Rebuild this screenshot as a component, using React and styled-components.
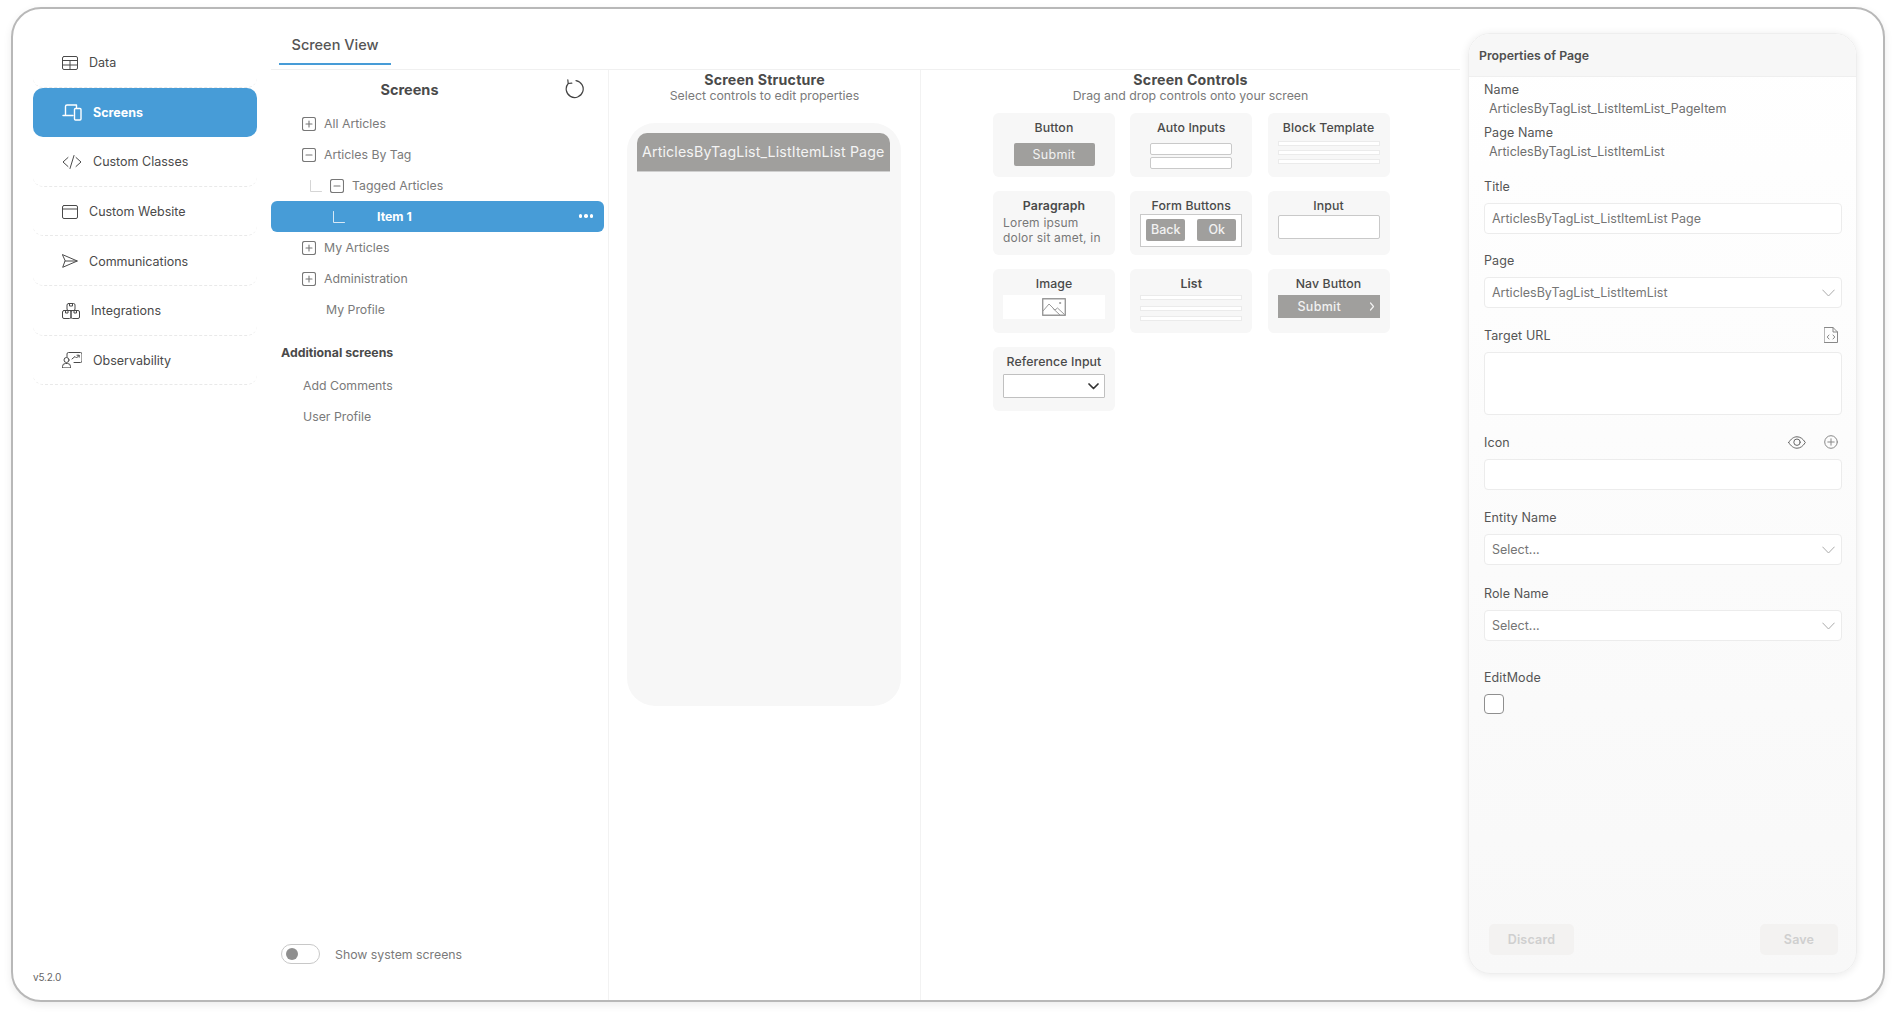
import React from 'react'
import styled, { createGlobalStyle } from 'styled-components'

const GlobalStyle = createGlobalStyle`
  html, body { margin: 0; padding: 0; background: #fff; }
  body { font-family: Inter, "Open Sans", "Liberation Sans", sans-serif; color: #555; }
  * { box-sizing: border-box; }
`

const Page = styled.div`
  width: 1896px;
  height: 1016px;
  padding: 7px 11px 14px 11px;
`

const Frame = styled.div`
  height: 100%;
  display: flex;
  border: 2px solid #b8b8b8;
  border-radius: 30px;
  box-shadow: 0 3px 8px rgba(0, 0, 0, 0.08);
  background: #fff;
  overflow: hidden;
`

/* sidebar */
const Sidebar = styled.nav`
  width: 258px;
  flex: none;
  padding: 29px 14px 16px 20px;
  display: flex;
  flex-direction: column;
`

const NavRow = styled.div`
  height: 49.6px;
  flex: none;
  display: flex;
  align-items: center;
  gap: 11px;
  padding: 1px 0 0 29px;
  border-radius: 10px;
  font-size: 12.5px;
  color: ${props => (props.$active ? '#fff' : '#4a4a4a')};
  font-weight: ${props => (props.$active ? 700 : 400)};
  background: ${props => (props.$active ? '#479cd7' : 'transparent')};
  border-bottom: 1px dashed ${props => (props.$active ? '#479cd7' : '#e9e9e9')};
`

const Version = styled.div`
  margin-top: auto;
  font-size: 10px;
  letter-spacing: -0.2px;
  color: #666;
  padding-bottom: 1px;
`

/* main area */
const Main = styled.main`
  flex: 1;
  min-width: 0;
  display: flex;
  flex-direction: column;
`

const TabBar = styled.div`
  height: 61px;
  flex: none;
  padding: 17px 0 0 8px;
  border-bottom: 1px solid #f0f0f0;
`

const Tab = styled.div`
  width: 112px;
  height: 39px;
  text-align: center;
  font-size: 14.5px;
  font-weight: 500;
  line-height: 38px;
  color: #555;
  border-bottom: 2px solid #479cd7;
`

const Panels = styled.div`
  flex: 1;
  min-height: 0;
  display: flex;
`

/* screens tree */
const ScreensPanel = styled.section`
  width: 338px;
  flex: none;
  display: flex;
  flex-direction: column;
  border-right: 1px solid #f2f2f2;
`

const ScreensHead = styled.div`
  height: 38px;
  padding-top: 1px;
  position: relative;
  display: flex;
  align-items: center;
  justify-content: center;
  font-size: 14.5px;
  font-weight: 700;
  color: #4a4a4a;
  padding-right: 60px;
`

const RefreshButton = styled.span`
  position: absolute;
  right: 23px;
  top: 9px;
  display: flex;
`

const Tree = styled.div`
  display: flex;
  flex-direction: column;
  width: 333px;
`

const TreeRow = styled.div`
  height: 31px;
  flex: none;
  display: flex;
  align-items: center;
  gap: 8px;
  padding-left: ${props => props.$indent}px;
  font-size: 12.3px;
  color: #7a7a7a;
`

const SelectedRow = styled(TreeRow)`
  position: relative;
  background: #479cd7;
  border-radius: 6px;
  color: #fff;
  font-weight: 700;
  gap: 32px;
`

const RowDots = styled.span`
  position: absolute;
  right: 11px;
  top: 13px;
  display: flex;
  gap: 2px;
`

const Dot = styled.i`
  width: 3.5px;
  height: 3.5px;
  border-radius: 50%;
  background: #fff;
`

const SectionTitle = styled.div`
  margin: 20px 0 0 10px;
  height: 16px;
  line-height: 16px;
  font-size: 12.3px;
  font-weight: 700;
  color: #4a4a4a;
`

const ExtraList = styled.div`
  margin-top: 9px;
  display: flex;
  flex-direction: column;
`

const ToggleRow = styled.label`
  margin-top: auto;
  margin-bottom: 36px;
  margin-left: 10px;
  display: flex;
  align-items: center;
  gap: 15px;
  font-size: 12.3px;
  color: #7a7a7a;
`

const Toggle = styled.span`
  width: 39px;
  height: 20px;
  border: 1px solid #c8c8c8;
  border-radius: 10px;
  padding: 3px 4px;
  display: flex;
`

const ToggleKnob = styled.i`
  width: 12px;
  height: 12px;
  border-radius: 50%;
  background: #8f8f8f;
`

/* structure */
const StructurePanel = styled.section`
  width: 312px;
  flex: none;
  display: flex;
  flex-direction: column;
  align-items: center;
  border-right: 1px solid #f2f2f2;
`

const PanelTitle = styled.h2`
  margin: 0;
  width: 100%;
  height: 17px;
  line-height: 17px;
  text-align: center;
  font-size: 14.2px;
  font-weight: 700;
  letter-spacing: 0.2px;
  color: #4a4a4a;
`

const PanelSub = styled.p`
  margin: 0;
  width: 100%;
  height: 16px;
  line-height: 16px;
  text-align: center;
  font-size: 12.3px;
  color: #7a7a7a;
`

const PanelTop = styled.div`
  padding-top: 1px;
  width: 100%;
`

const Phone = styled.div`
  margin: 19px 1.5px 0 0;
  width: 274px;
  height: 583px;
  flex: none;
  background: #f7f7f7;
  border-radius: 28px;
  padding: 10px 11px 10px 10px;
`

const PhoneHeader = styled.div`
  height: 39px;
  border-radius: 10px 10px 0 0;
  background: #a09f9d;
  border-bottom: 1px solid #cfcfcf;
  text-align: center;
  line-height: 38px;
  font-size: 14.2px;
  letter-spacing: 0.15px;
  color: #f4f4f4;
  white-space: nowrap;
`

/* controls */
const ControlsPanel = styled.section`
  flex: 1;
  min-width: 0;
  display: flex;
  flex-direction: column;
`

const ControlsGrid = styled.div`
  margin: 9px 0 0 72px;
  display: grid;
  grid-template-columns: repeat(3, 122px);
  grid-auto-rows: 64px;
  column-gap: 15.25px;
  row-gap: 14px;
`

const Card = styled.div`
  background: #f7f7f7;
  border-radius: 6px;
  padding: 6px 10px 0;
  display: flex;
  flex-direction: column;
  align-items: center;
`

const CardTitle = styled.div`
  width: 100%;
  height: 17px;
  line-height: 17px;
  text-align: center;
  font-size: 12.3px;
  font-weight: ${props => (props.$strong ? 600 : 500)};
  letter-spacing: 0.1px;
  color: #4a4a4a;
  white-space: nowrap;
  flex: none;
`

const GreyButton = styled.div`
  margin-top: 7px;
  width: 81px;
  height: 23px;
  border-radius: 2px;
  background: #a09f9d;
  color: #f2f2f2;
  font-size: 12.5px;
  letter-spacing: 0.3px;
  line-height: 23px;
  text-align: center;
`

const BlankInput = styled.div`
  flex: none;
  width: ${props => props.$w || 102}px;
  height: ${props => props.$h || 12}px;
  margin-top: ${props => props.$top || 0}px;
  background: #fff;
  border: 1px solid #c9c9c9;
  border-radius: 2px;
`

const Lines = styled.div`
  display: flex;
  flex-direction: column;
  gap: ${props => props.$gap}px;
  margin-top: ${props => props.$top}px;
`

const Line = styled.div`
  width: 102px;
  height: 5px;
  background: #fff;
  border: 1px solid #ebebeb;
`

const ParagraphText = styled.div`
  margin-top: 2px;
  width: 102px;
  font-size: 12px;
  line-height: 14.5px;
  letter-spacing: 0.2px;
  color: #777;
  white-space: nowrap;
`

const ButtonsBox = styled.div`
  width: 102px;
  height: 33px;
  flex: none;
  background: #fff;
  border: 1px solid #c9c9c9;
  padding: 4px 5px;
  display: flex;
  justify-content: space-between;
`

const SmallButton = styled.div`
  width: 39px;
  height: 22px;
  border-radius: 2px;
  background: #a09f9d;
  color: #f2f2f2;
  font-size: 12.5px;
  font-weight: 500;
  line-height: 22px;
  text-align: center;
`

const ImageBox = styled.div`
  margin-top: 3px;
  width: 102px;
  height: 24px;
  background: #fff;
  display: flex;
  align-items: center;
  justify-content: center;
`

const NavSubmit = styled.div`
  margin-top: 3px;
  width: 102px;
  height: 23px;
  flex: none;
  background: #a09f9d;
  color: #f2f2f2;
  font-size: 12.5px;
  font-weight: 500;
  letter-spacing: 0.3px;
  display: flex;
  align-items: center;
  justify-content: space-between;
  padding: 0 5px 0 20px;
`

const RefSelect = styled.div`
  margin-top: 4px;
  width: 102px;
  height: 24px;
  flex: none;
  background: #fff;
  border: 1px solid #c0c0c0;
  border-radius: 1px;
  display: flex;
  align-items: center;
  justify-content: flex-end;
  padding-right: 5px;
`

/* properties */
const Properties = styled.aside`
  width: 389px;
  flex: none;
  margin: 24px 26px 26px 8px;
  border: 1px solid #eeeeee;
  border-radius: 22px;
  box-shadow: 0 1px 8px rgba(0, 0, 0, 0.09);
  background: linear-gradient(#ffffff, #f8f8f8);
  display: flex;
  flex-direction: column;
  overflow: hidden;
`

const PropsHeader = styled.header`
  height: 43px;
  flex: none;
  background: #f7f7f7;
  border-bottom: 1px solid #efefef;
  padding: 0 10px;
  display: flex;
  align-items: center;
  font-size: 12.3px;
  font-weight: 600;
  color: #4f4f4f;
`

const PropsBody = styled.div`
  flex: 1;
  display: flex;
  flex-direction: column;
  padding: 4px 14px 18px 15px;
`

const ReadField = styled.div`
  margin-bottom: 6px;
`

const Label = styled.div`
  height: 18px;
  line-height: 17px;
  font-size: 12.5px;
  letter-spacing: 0.1px;
  color: #555;
`

const ReadValue = styled.div`
  height: 19px;
  line-height: 20px;
  padding-left: 5px;
  font-size: 12.5px;
  color: #6f6f6f;
`

const Field = styled.div`
  margin-top: ${props => props.$top}px;
`

const FieldLabel = styled.div`
  height: 16px;
  margin-bottom: 9px;
  display: flex;
  align-items: center;
  justify-content: space-between;
  font-size: 12.5px;
  letter-spacing: 0.1px;
  color: #555;
`

const FieldIcons = styled.span`
  display: flex;
  align-items: center;
  gap: 18px;
  padding-right: 4px;
`

const TextBox = styled.div`
  height: ${props => props.$h || 31}px;
  background: #fff;
  border: 1px solid #ececec;
  border-radius: 4px;
  padding: 0 6px 0 7px;
  display: flex;
  align-items: center;
  justify-content: space-between;
  font-size: 12.5px;
  color: #757575;
`

const Checkbox = styled.div`
  width: 20px;
  height: 20px;
  border: 1px solid #8f8f8f;
  border-radius: 4px;
  background: #fff;
`

const PropsFooter = styled.footer`
  margin-top: auto;
  padding: 0 4px 0 5px;
  display: flex;
  justify-content: space-between;
`

const DisabledButton = styled.div`
  width: ${props => props.$w}px;
  height: 31px;
  border-radius: 5px;
  background: #f3f2f1;
  color: #cfcfcf;
  font-size: 12.5px;
  font-weight: 600;
  line-height: 31px;
  text-align: center;
  letter-spacing: 0.2px;
`

const Svg = ({ w, h, sw = 1, c = '#4a4a4a', children }) => (
  <svg width={w} height={h} viewBox={`0 0 ${w} ${h}`} fill="none" stroke={c} strokeWidth={sw} strokeLinecap="round" strokeLinejoin="round" style={{ flex: 'none' }}>
    {children}
  </svg>
)

const DataIcon = () => (
  <Svg w={16} h={14}>
    <rect x="0.5" y="0.5" width="15" height="13" rx="1.5" />
    <path d="M.5 4.5h15M.5 9h15M8 4.5v9" />
  </Svg>
)

const ScreensIcon = () => (
  <Svg w={20} h={17} c="#fff" sw={1.4}>
    <path d="M3.5 10.5V2.5a1.5 1.5 0 0 1 1.5-1.5h9.5v2.5M1 11.5h10" />
    <rect x="12.5" y="4.5" width="6.5" height="11.5" rx="1" />
  </Svg>
)

const CodeIcon = () => (
  <Svg w={20} h={14}>
    <path d="M6 2.5 1 7l5 4.5M14 2.5 19 7l-5 4.5M12 .5 8 13.5" />
  </Svg>
)

const WebsiteIcon = () => (
  <Svg w={16} h={14}>
    <rect x="0.5" y="0.5" width="15" height="13" rx="1.5" />
    <path d="M.5 4h15" />
  </Svg>
)

const SendIcon = () => (
  <Svg w={16} h={14}>
    <path d="M.7.7 15.3 7 .7 13.3 3 7zM3 7h12" />
  </Svg>
)

const IntegrationsIcon = () => (
  <Svg w={18} h={16}>
    <rect x="5" y="0.5" width="8" height="7" rx="1.5" />
    <rect x="0.5" y="7.5" width="8.5" height="8" rx="1.5" />
    <rect x="9" y="7.5" width="8.5" height="8" rx="1.5" />
    <path d="M7.5.5v2.5h3V.5M3.5 7.5V10h2.5V7.5M12 7.5V10h2.5V7.5" />
  </Svg>
)

const ObservabilityIcon = () => (
  <Svg w={20} h={16}>
    <path d="M5 5V2a1.5 1.5 0 0 1 1.5-1.5h12A1.5 1.5 0 0 1 20 2v7a1.5 1.5 0 0 1-1.5 1.5H12" />
    <circle cx="4.5" cy="8" r="2.5" />
    <path d="M.5 15.5v-1a3 3 0 0 1 3-3h2a3 3 0 0 1 3 3v1zM10 7l3-2.5 1.5 1.5L17 3.5M15 3.2h2.2v2" />
  </Svg>
)

const RefreshIcon = () => (
  <Svg w={20} h={20} c="#444" sw={1.2}>
    <path d="M11 1.6a8.5 8.5 0 1 1-7.8 2.9M2.8.8l.4 3.7 3.6-.4" />
  </Svg>
)

const TreeToggle = ({ open }) => (
  <Svg w={14} h={14} c="#777" sw={1.1}>
    <rect x="0.5" y="0.5" width="13" height="13" rx="2" />
    <path d={open ? 'M4 7h6' : 'M4 7h6M7 4v6'} />
  </Svg>
)

const TreeElbow = ({ c = '#d5d5d5' }) => (
  <Svg w={12} h={12} c={c}>
    <path d="M.5 .5v11h11" />
  </Svg>
)

const ImageIcon = () => (
  <Svg w={24} h={18} c="#999" sw={1}>
    <rect x="0.7" y="0.7" width="22.6" height="16.6" strokeWidth="1.4" />
    <path d="M1 13 7 6l6 6 2.5-2 7 6.5M11 10.5 18 17" />
    <circle cx="18" cy="5" r=".6" />
  </Svg>
)

const ChevronRight = () => (
  <Svg w={6} h={9} c="#f2f2f2" sw={1.2}>
    <path d="m1.5 1 3 3.5-3 3.5" />
  </Svg>
)

const ChevronDownBold = () => (
  <Svg w={11} h={7} c="#333" sw={1.7}>
    <path d="m1 1 4.5 4.5L10 1" />
  </Svg>
)

const SelectChevron = () => (
  <Svg w={13} h={8} c="#aaa" sw={1}>
    <path d="m.7 1 5.8 6 5.8-6" />
  </Svg>
)

const FileCodeIcon = () => (
  <Svg w={14} h={16} c="#888" sw={1}>
    <path d="M.5.5h8.5l4.5 4.5v10.5H.5zM9 .5V5h4.5M5 8 3.2 10 5 12M9 8l1.8 2L9 12" />
  </Svg>
)

const EyeIcon = () => (
  <Svg w={18} h={13} c="#666" sw={1}>
    <path d="M.7 6.5C3 2.7 5.8.8 9 .8s6 1.9 8.3 5.7C15 10.3 12.2 12.2 9 12.2S3 10.3.7 6.5z" />
    <circle cx="9" cy="6.2" r="3.2" />
  </Svg>
)

const PlusCircleIcon = () => (
  <Svg w={14} h={14} c="#888" sw={1}>
    <circle cx="7" cy="7" r="6.3" />
    <path d="M7 3.8v6.4M3.8 7h6.4" />
  </Svg>
)

const navItems = [
  { label: 'Data', icon: <DataIcon /> },
  { label: 'Screens', icon: <ScreensIcon />, active: true },
  { label: 'Custom Classes', icon: <CodeIcon /> },
  { label: 'Custom Website', icon: <WebsiteIcon /> },
  { label: 'Communications', icon: <SendIcon /> },
  { label: 'Integrations', icon: <IntegrationsIcon /> },
  { label: 'Observability', icon: <ObservabilityIcon /> },
]

const App = () => {
  return (
    <Page>
      <GlobalStyle />
      <Frame>
        <Sidebar>
          {navItems.map(item => (
            <NavRow key={item.label} $active={item.active}>
              {item.icon}
              {item.label}
            </NavRow>
          ))}
          <Version>v5.2.0</Version>
        </Sidebar>

        <Main>
          <TabBar>
            <Tab>Screen View</Tab>
          </TabBar>
          <Panels>
            <ScreensPanel>
              <ScreensHead>
                Screens
                <RefreshButton><RefreshIcon /></RefreshButton>
              </ScreensHead>
              <Tree>
                <TreeRow $indent={31}><TreeToggle />All Articles</TreeRow>
                <TreeRow $indent={31}><TreeToggle open />Articles By Tag</TreeRow>
                <TreeRow $indent={39}><TreeElbow /><TreeToggle open />Tagged Articles</TreeRow>
                <SelectedRow $indent={62}>
                  <TreeElbow c="#d8e9f6" />Item 1
                  <RowDots><Dot /><Dot /><Dot /></RowDots>
                </SelectedRow>
                <TreeRow $indent={31}><TreeToggle />My Articles</TreeRow>
                <TreeRow $indent={31}><TreeToggle />Administration</TreeRow>
                <TreeRow $indent={55}>My Profile</TreeRow>
              </Tree>
              <SectionTitle>Additional screens</SectionTitle>
              <ExtraList>
                <TreeRow $indent={32}>Add Comments</TreeRow>
                <TreeRow $indent={32}>User Profile</TreeRow>
              </ExtraList>
              <ToggleRow>
                <Toggle><ToggleKnob /></Toggle>
                Show system screens
              </ToggleRow>
            </ScreensPanel>

            <StructurePanel>
              <PanelTop>
                <PanelTitle>Screen Structure</PanelTitle>
                <PanelSub>Select controls to edit properties</PanelSub>
              </PanelTop>
              <Phone>
                <PhoneHeader>ArticlesByTagList_ListItemList Page</PhoneHeader>
              </Phone>
            </StructurePanel>

            <ControlsPanel>
              <PanelTop>
                <PanelTitle>Screen Controls</PanelTitle>
                <PanelSub>Drag and drop controls onto your screen</PanelSub>
              </PanelTop>
              <ControlsGrid>
                <Card>
                  <CardTitle>Button</CardTitle>
                  <GreyButton>Submit</GreyButton>
                </Card>
                <Card>
                  <CardTitle>Auto Inputs</CardTitle>
                  <BlankInput $w={82} $top={7} />
                  <BlankInput $w={82} $top={2} />
                </Card>
                <Card>
                  <CardTitle>Block Template</CardTitle>
                  <Lines $gap={4} $top={5}><Line /><Line /><Line /></Lines>
                </Card>
                <Card>
                  <CardTitle $strong>Paragraph</CardTitle>
                  <ParagraphText>Lorem ipsum<br />dolor sit amet, in</ParagraphText>
                </Card>
                <Card>
                  <CardTitle>Form Buttons</CardTitle>
                  <ButtonsBox>
                    <SmallButton>Back</SmallButton>
                    <SmallButton>Ok</SmallButton>
                  </ButtonsBox>
                </Card>
                <Card>
                  <CardTitle>Input</CardTitle>
                  <BlankInput $h={24} $top={1} />
                </Card>
                <Card>
                  <CardTitle>Image</CardTitle>
                  <ImageBox><ImageIcon /></ImageBox>
                </Card>
                <Card>
                  <CardTitle $strong>List</CardTitle>
                  <Lines $gap={5.5} $top={3}><Line /><Line /><Line /></Lines>
                </Card>
                <Card>
                  <CardTitle>Nav Button</CardTitle>
                  <NavSubmit>Submit<ChevronRight /></NavSubmit>
                </Card>
                <Card>
                  <CardTitle>Reference Input</CardTitle>
                  <RefSelect><ChevronDownBold /></RefSelect>
                </Card>
              </ControlsGrid>
            </ControlsPanel>
          </Panels>
        </Main>

        <Properties>
          <PropsHeader>Properties of Page</PropsHeader>
          <PropsBody>
            <ReadField>
              <Label>Name</Label>
              <ReadValue>ArticlesByTagList_ListItemList_PageItem</ReadValue>
            </ReadField>
            <ReadField>
              <Label>Page Name</Label>
              <ReadValue>ArticlesByTagList_ListItemList</ReadValue>
            </ReadField>
            <Field $top={11}>
              <FieldLabel>Title</FieldLabel>
              <TextBox>ArticlesByTagList_ListItemList Page</TextBox>
            </Field>
            <Field $top={18}>
              <FieldLabel>Page</FieldLabel>
              <TextBox>ArticlesByTagList_ListItemList<SelectChevron /></TextBox>
            </Field>
            <Field $top={19}>
              <FieldLabel>Target URL<FieldIcons><FileCodeIcon /></FieldIcons></FieldLabel>
              <TextBox $h={63} />
            </Field>
            <Field $top={19}>
              <FieldLabel>Icon<FieldIcons><EyeIcon /><PlusCircleIcon /></FieldIcons></FieldLabel>
              <TextBox />
            </Field>
            <Field $top={19}>
              <FieldLabel>Entity Name</FieldLabel>
              <TextBox>Select...<SelectChevron /></TextBox>
            </Field>
            <Field $top={20}>
              <FieldLabel>Role Name</FieldLabel>
              <TextBox>Select...<SelectChevron /></TextBox>
            </Field>
            <Field $top={28}>
              <FieldLabel>EditMode</FieldLabel>
              <Checkbox />
            </Field>
            <PropsFooter>
              <DisabledButton $w={85}>Discard</DisabledButton>
              <DisabledButton $w={78}>Save</DisabledButton>
            </PropsFooter>
          </PropsBody>
        </Properties>
      </Frame>
    </Page>
  )
}

export default App
